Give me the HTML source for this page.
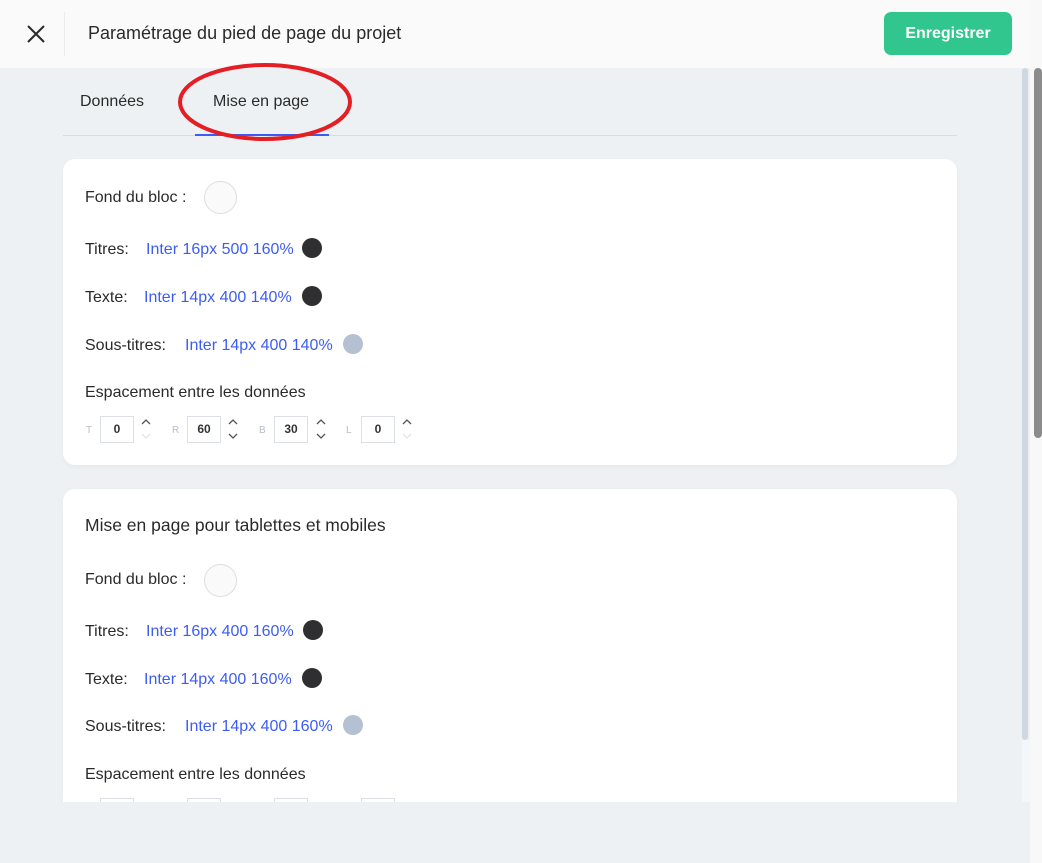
<!DOCTYPE html>
<html><head><meta charset="utf-8"><style>
*{margin:0;padding:0;box-sizing:border-box}
body{width:1042px;height:863px;overflow:hidden;background:#eef1f3;font-family:"Liberation Sans",sans-serif;color:#2a2a2a;position:relative}
.a{position:absolute;white-space:nowrap}
.hdr{position:absolute;left:0;top:0;width:1030px;height:68px;background:#fafafa}
.card{position:absolute;left:63px;width:894px;background:#fff;border-radius:12px;box-shadow:0 2px 6px rgba(0,0,0,.04)}
.lbl{font-size:16px;color:#2a2a2a}
.blue{font-size:16px;color:#3d5cf5}
.dot{position:absolute;width:20px;height:20px;border-radius:50%}
.box{position:absolute;width:34px;height:27px;border:1px solid #dcdfe4;font-size:12px;font-weight:bold;text-align:center;line-height:25px;color:#333}
.sm{position:absolute;font-size:10px;color:#b5bcc8}
.ar{position:absolute}
</style></head><body>
<div class="hdr"></div>
<svg class="a" style="left:26px;top:24px" width="20" height="20"><path d="M2 2L18 18M18 2L2 18" stroke="#2a2a2a" stroke-width="2"/></svg>
<div class="a" style="left:64px;top:12px;width:1px;height:44px;background:#ebebeb"></div>
<div class="a" style="left:88px;top:23px;font-size:18px">Paramétrage du pied de page du projet</div>
<div class="a" style="left:884px;top:12px;width:128px;height:43px;background:#30c68e;border-radius:7px;color:#fff;font-weight:bold;font-size:16px;text-align:center;line-height:43px">Enregistrer</div>
<div class="a" style="left:1030px;top:0;width:12px;height:863px;background:#f8f8f8"></div>
<div class="a" style="left:1034px;top:68px;width:8px;height:370px;background:#8c8c8c;border-radius:4px"></div>
<div class="a" style="left:1022px;top:68px;width:6px;height:672px;background:#cfd8e0;border-radius:3px"></div>
<div class="a" style="left:1022px;top:740px;width:8px;height:62px;background:#f4f7fa"></div>

<div class="a" style="left:80px;top:93px;font-size:16px">Données</div>
<div class="a" style="left:213px;top:93px;font-size:16px">Mise en page</div>
<div class="a" style="left:63px;top:135px;width:894px;height:1px;background:#d8dce0"></div>
<div class="a" style="left:195px;top:134px;width:134px;height:2px;background:#3d5cf5"></div>
<svg class="a" style="left:176px;top:60px" width="180" height="86"><ellipse cx="89" cy="42" rx="85" ry="37" fill="none" stroke="#e31e24" stroke-width="4"/></svg>

<div class="card" style="top:159px;height:306px"></div>
<div class="a lbl" style="left:85px;top:189px">Fond du bloc :</div>
<div class="dot" style="left:204px;top:181px;width:33px;height:33px;border:1px solid #ddd;background:#fafafa"></div>
<div class="a lbl" style="left:85px;top:241px">Titres:</div><div class="a blue" style="left:146px;top:241px">Inter 16px 500 160%</div><div class="dot" style="left:302px;top:238px;background:#2f2e30"></div>
<div class="a lbl" style="left:85px;top:289px">Texte:</div><div class="a blue" style="left:144px;top:289px">Inter 14px 400 140%</div><div class="dot" style="left:302px;top:286px;background:#2f2e30"></div>
<div class="a lbl" style="left:85px;top:337px">Sous-titres:</div><div class="a blue" style="left:185px;top:337px">Inter 14px 400 140%</div><div class="dot" style="left:343px;top:334px;background:#b5c0d3"></div>
<div class="a lbl" style="left:85px;top:384px">Espacement entre les données</div>
<div class="sm" style="left:86px;top:425px">T</div><div class="box" style="left:100px;top:416px">0</div>
<svg class="ar" style="left:140px;top:417px" width="12" height="24"><path d="M2 7L6 3L10 7" fill="none" stroke="#555" stroke-width="1.3"/><path d="M2 17L6 21L10 17" fill="none" stroke="#e0e3e8" stroke-width="1.3"/></svg>
<div class="sm" style="left:172px;top:425px">R</div><div class="box" style="left:187px;top:416px">60</div>
<svg class="ar" style="left:227px;top:417px" width="12" height="24"><path d="M2 7L6 3L10 7" fill="none" stroke="#555" stroke-width="1.3"/><path d="M2 17L6 21L10 17" fill="none" stroke="#555" stroke-width="1.3"/></svg>
<div class="sm" style="left:259px;top:425px">B</div><div class="box" style="left:274px;top:416px">30</div>
<svg class="ar" style="left:315px;top:417px" width="12" height="24"><path d="M2 7L6 3L10 7" fill="none" stroke="#555" stroke-width="1.3"/><path d="M2 17L6 21L10 17" fill="none" stroke="#555" stroke-width="1.3"/></svg>
<div class="sm" style="left:346px;top:425px">L</div><div class="box" style="left:361px;top:416px">0</div>
<svg class="ar" style="left:401px;top:417px" width="12" height="24"><path d="M2 7L6 3L10 7" fill="none" stroke="#555" stroke-width="1.3"/><path d="M2 17L6 21L10 17" fill="none" stroke="#e0e3e8" stroke-width="1.3"/></svg>

<div class="card" style="top:489px;height:313px;border-radius:12px 12px 0 0"></div>
<div class="a" style="left:85px;top:515px;font-size:17.5px;color:#2a2a2a">Mise en page pour tablettes et mobiles</div>
<div class="a lbl" style="left:85px;top:571px">Fond du bloc :</div>
<div class="dot" style="left:204px;top:564px;width:33px;height:33px;border:1px solid #ddd;background:#fafafa"></div>
<div class="a lbl" style="left:85px;top:623px">Titres:</div><div class="a blue" style="left:146px;top:623px">Inter 16px 400 160%</div><div class="dot" style="left:303px;top:620px;background:#2f2e30"></div>
<div class="a lbl" style="left:85px;top:671px">Texte:</div><div class="a blue" style="left:144px;top:671px">Inter 14px 400 160%</div><div class="dot" style="left:302px;top:668px;background:#2f2e30"></div>
<div class="a lbl" style="left:85px;top:718px">Sous-titres:</div><div class="a blue" style="left:185px;top:718px">Inter 14px 400 160%</div><div class="dot" style="left:343px;top:715px;background:#b5c0d3"></div>
<div class="a lbl" style="left:85px;top:766px">Espacement entre les données</div>
<div class="a" style="left:100px;top:798px;width:34px;height:4px;border:1px solid #dcdfe4;border-bottom:none"></div>
<div class="a" style="left:187px;top:798px;width:34px;height:4px;border:1px solid #dcdfe4;border-bottom:none"></div>
<div class="a" style="left:274px;top:798px;width:34px;height:4px;border:1px solid #dcdfe4;border-bottom:none"></div>
<div class="a" style="left:361px;top:798px;width:34px;height:4px;border:1px solid #dcdfe4;border-bottom:none"></div>
<div class="a" style="left:0;top:802px;width:1030px;height:61px;background:#eef1f3"></div>
</body></html>
